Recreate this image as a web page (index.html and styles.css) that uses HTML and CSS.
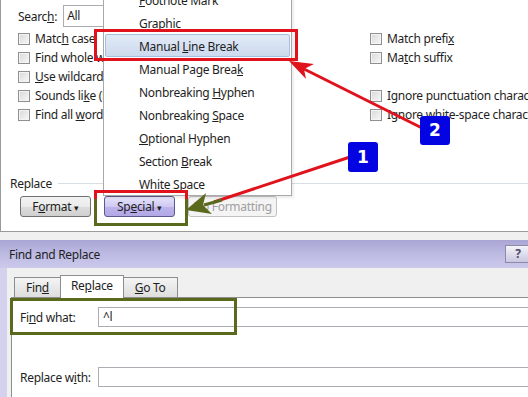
FILE: index.html
```html
<!DOCTYPE html>
<html lang="en">
<head>
    <meta charset="UTF-8">
    <meta name="viewport" content="width=device-width, initial-scale=1.0">
    <title>Find and Replace - Special</title>
    <link rel="stylesheet" href="styles.css">
</head>
<body>
<div class="page">
    <!-- Upper part: expanded Find dialog with the Special menu open -->
    <div class="top-panel">
        <div class="search-row">
            <span class="lbl">Searc<u>h</u>:</span>
            <div class="select">All</div>
        </div>

        <div class="options">
            <div class="check"><span class="box"></span><span>Matc<u>h</u> case</span></div>
            <div class="check"><span class="box"></span><span>Match prefi<u>x</u></span></div>
            <div class="check"><span class="box"></span><span>Find whole words only</span></div>
            <div class="check"><span class="box"></span><span>Ma<u>t</u>ch suffix</span></div>
            <div class="check"><span class="box"></span><span><u>U</u>se wildcards</span></div>
            <div class="check empty"></div>
            <div class="check"><span class="box"></span><span>Sounds li<u>k</u>e (English)</span></div>
            <div class="check"><span class="box"></span><span>Ignore punctuation characters</span></div>
            <div class="check"><span class="box"></span><span>Find all <u>w</u>ord forms (English)</span></div>
            <div class="check"><span class="box"></span><span>Ignore white-space characters</span></div>
        </div>

        <div class="group-title"><span>Replace</span><span class="rule"></span></div>

        <div class="btn-row">
            <button class="btn">F<u>o</u>rmat <span class="caret">&#9662;</span></button>
            <button class="btn special">Sp<u>e</u>cial <span class="caret">&#9662;</span></button>
            <button class="btn" disabled>No Formatting</button>
        </div>

        <!-- Special dropdown menu -->
        <ul class="menu">
            <li><u>F</u>ootnote Mark</li>
            <li>Graph<u>i</u>c</li>
            <li class="hot">Manual <u>L</u>ine Break</li>
            <li>Manual Page Brea<u>k</u></li>
            <li>Nonbreaking <u>H</u>yphen</li>
            <li>Nonbreaking <u>S</u>pace</li>
            <li><u>O</u>ptional Hyphen</li>
            <li>Section <u>B</u>reak</li>
            <li>White Space</li>
        </ul>
    </div>

    <div class="strip"></div>

    <!-- Lower part: Find and Replace dialog -->
    <div class="dialog">
        <div class="titlebar">
            <span>Find and Replace</span>
            <span class="help">?</span>
        </div>
        <div class="dlg-body">
            <div class="tabs">
                <div class="tab">Fin<u>d</u></div>
                <div class="tab active">Re<u>p</u>lace</div>
                <div class="tab"><u>G</u>o To</div>
            </div>
            <div class="tab-panel">
                <div class="field">
                    <span class="field-lbl">Fi<u>n</u>d what:</span>
                    <div class="input">^l</div>
                </div>
                <div class="field second">
                    <span class="field-lbl">Replace w<u>i</u>th:</span>
                    <div class="input"></div>
                </div>
            </div>
        </div>
    </div>

    <!-- Annotations drawn over the screenshot -->
    <svg class="marks" width="528" height="397" viewBox="0 0 528 397">
        <rect x="95.5" y="30.5" width="201" height="29" fill="none" stroke="#e0121c" stroke-width="3"/>
        <path d="M95.5 201 V191.5 H186.5 V201" fill="none" stroke="#e0121c" stroke-width="3"/>
        <path d="M95.5 199 V224.5 H186.5 V199" fill="none" stroke="#5a6a1c" stroke-width="3"/>
        <rect x="11.5" y="299.5" width="224" height="34" fill="none" stroke="#5a6a1c" stroke-width="3"/>

        <line x1="424" y1="129" x2="304" y2="69" stroke="#e0121c" stroke-width="3"/>
        <polygon points="289,61 314,64 304,69 306,79" fill="#e0121c"/>

        <line x1="350" y1="157" x2="214" y2="202" stroke="#e0121c" stroke-width="3"/>
        <line x1="222" y1="200" x2="204" y2="205" stroke="#5a6a1c" stroke-width="3"/>
        <polygon points="186,210 206,193 203,205 212,214" fill="#5a6a1c"/>
    </svg>
    <div class="badge b1">1</div>
    <div class="badge b2">2</div>
</div>
</body>
</html>
```

FILE: styles.css
```css
/* Base */
body {
    margin: 0;
    font-family: "Noto Sans", "Open Sans", sans-serif;
    font-size: 12px;
    letter-spacing: -0.3px;
    color: #1e1e1e;
    background-color: #ffffff;
}

u {
    text-decoration: underline;
    text-underline-offset: 1px;
}

.page {
    position: relative;
    width: 528px;
    height: 397px;
    overflow: hidden;
}

/* Upper dialog */
.top-panel {
    position: relative;
    height: 231px;
    background-color: #ffffff;
    border-left: 1px solid #9a9a9a;
    border-bottom: 1px solid #9a9a9a;
}

.search-row {
    display: flex;
    align-items: center;
    gap: 6px;
    padding: 5px 0 0 17px;
    height: 22px;
}

.select {
    width: 120px;
    height: 20px;
    line-height: 20px;
    padding-left: 3px;
    border: 1px solid #abadb3;
}

.options {
    display: grid;
    grid-template-columns: 352px 1fr;
    grid-auto-rows: 19px;
    margin-top: 2px;
    padding-left: 17px;
    white-space: nowrap;
}

.check {
    display: flex;
    align-items: center;
    gap: 5px;
}

.box {
    width: 10px;
    height: 10px;
    border: 1px solid #8e8f8f;
    background: linear-gradient(135deg, #d8d8d8, #f8f8f8);
    box-shadow: inset 0 0 0 1px #f4f4f4;
}

.group-title {
    display: flex;
    align-items: center;
    gap: 6px;
    margin-top: 51px;
    padding-left: 9px;
    height: 16px;
}

.group-title .rule {
    flex: 1;
    height: 1px;
    background-color: #d5dfe5;
}

.btn-row {
    display: flex;
    gap: 13px;
    margin-top: 5px;
    padding-left: 19px;
}

.btn {
    height: 21px;
    width: 71px;
    padding: 0;
    font-family: inherit;
    font-size: 12px;
    letter-spacing: -0.3px;
    color: #1e1e1e;
    border: 1px solid #707070;
    border-radius: 3px;
    background: linear-gradient(#f2f2f2, #ebebeb 50%, #dddddd 51%, #cfcfcf);
}

.btn .caret {
    font-size: 9px;
}

.btn.special {
    border-color: #5c5a8c;
    background: linear-gradient(#e6e3fa, #cfc9f2 50%, #bdb4ec 51%, #b1a7e6);
}

.btn[disabled] {
    width: 89px;
    color: #a0a0a0;
    border-color: #c2c2c2;
    background: #f4f4f4;
}

/* Special dropdown */
.menu {
    position: absolute;
    left: 102px;
    top: -13px;
    width: 187px;
    margin: 0;
    padding: 0;
    list-style: none;
    background-color: #ffffff;
    border: 1px solid #a9a9a9;
    box-shadow: 2px 2px 2px rgba(0, 0, 0, 0.08);
}

.menu li {
    height: 23px;
    line-height: 23px;
    padding-left: 33px;
    border: 1px solid transparent;
    margin: 0 1px;
    box-sizing: border-box;
    white-space: nowrap;
}

.menu li.hot {
    background: linear-gradient(#e1e9f6, #cddbef);
    border-color: #a7bedf;
    border-radius: 2px;
}

.strip {
    height: 8px;
    background-color: #f0f0f0;
}

/* Lower dialog */
.dialog {
    background-color: #d4d1ee;
    height: 158px;
}

.titlebar {
    display: flex;
    align-items: center;
    justify-content: space-between;
    height: 28px;
    padding-left: 9px;
    background: linear-gradient(#a9a6d4, #bdbae3 50%, #ccc9ec);
}

.help {
    width: 24px;
    height: 16px;
    line-height: 16px;
    margin-right: -3px;
    text-align: center;
    font-weight: bold;
    color: #4a4a6a;
    border: 1px solid #8c8aa8;
    background: linear-gradient(#f4f4fa, #c9c7df);
}

.dlg-body {
    margin-left: 7px;
    padding: 8px 0 0 4px;
    background-color: #f0f0f0;
    height: 122px;
}

.tabs {
    position: relative;
    z-index: 1;
    display: flex;
    align-items: flex-end;
    height: 21px;
    padding-left: 3px;
    white-space: nowrap;
}

.tab {
    height: 19px;
    line-height: 19px;
    padding: 0 11px;
    border: 1px solid #8d8d8d;
    border-bottom: none;
    background: linear-gradient(#f4f4f4, #dedede);
    margin-right: -1px;
}

.tab.active {
    height: 22px;
    line-height: 20px;
    padding: 0 10px;
    margin-bottom: -1px;
    background: #ffffff;
    position: relative;
}

.tab-panel {
    background-color: #ffffff;
    border: 1px solid #8d8d8d;
    height: 100px;
    margin-right: -30px;
    padding: 9px 0 0 8px;
}

.field {
    display: flex;
    align-items: center;
}

.field.second {
    margin-top: 40px;
}

.field-lbl {
    width: 78px;
}

.input {
    flex: 1;
    height: 18px;
    line-height: 18px;
    padding-left: 4px;
    border: 1px solid #abadb3;
}

/* Annotations */
.marks {
    position: absolute;
    left: 0;
    top: 0;
}

.badge {
    position: absolute;
    width: 30px;
    height: 30px;
    line-height: 30px;
    text-align: center;
    background-color: #0404e2;
    color: #ffffff;
    font-family: "DejaVu Sans", sans-serif;
    font-weight: bold;
    font-size: 17px;
    letter-spacing: 0;
    border-radius: 3px;
}

.b1 {
    left: 348px;
    top: 142px;
}

.b2 {
    left: 420px;
    top: 116px;
    height: 29px;
    line-height: 29px;
}
```
